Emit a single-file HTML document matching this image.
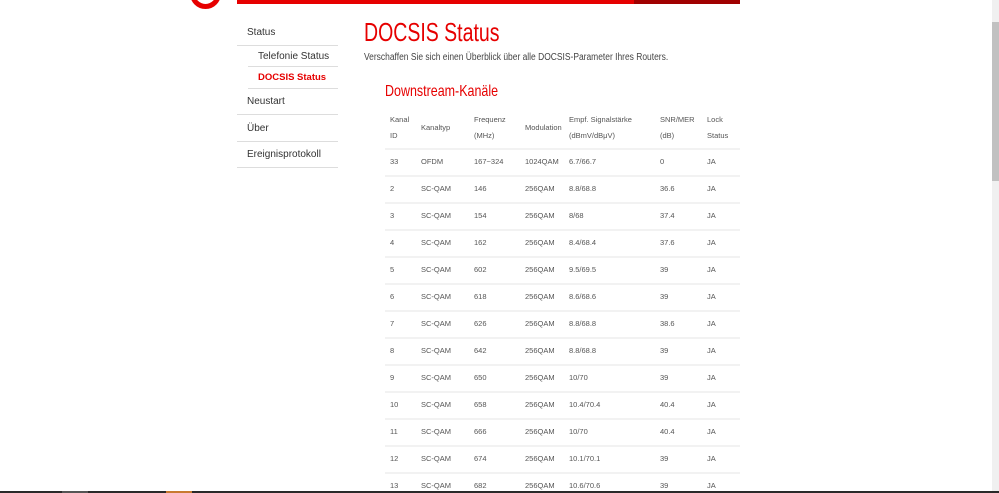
<!DOCTYPE html>
<html><head><meta charset="utf-8"><style>
*{margin:0;padding:0;box-sizing:border-box}
body{width:999px;height:493px;overflow:hidden;background:#fff;font-family:"Liberation Sans",Arial,sans-serif;position:relative;color:#333}
.a{position:absolute;white-space:nowrap}
.ring{position:absolute;left:190px;top:-22px;width:31px;height:31px;border:5px solid #e60000;border-radius:50%}
.bar{position:absolute;left:237px;top:0;width:397px;height:4px;background:#e60000}
.bar2{position:absolute;left:634px;top:0;width:106px;height:4px;background:#a00000}
.nav{font-size:10px;color:#333}
.ln{position:absolute;height:1px;background:#ddd}
h1{position:absolute;left:364px;top:17px;font-weight:normal;font-size:26px;color:#e60000;white-space:nowrap;transform:scaleX(0.75);transform-origin:0 0}
.sub{left:364px;top:52px;font-size:10px;color:#444;transform:scaleX(0.845);transform-origin:0 0}
h2{position:absolute;left:385px;top:83px;font-weight:normal;font-size:16px;color:#e60000;white-space:nowrap;transform:scaleX(0.78);transform-origin:0 0}
.t{font-size:7.5px;color:#555}
.rl{position:absolute;left:385px;width:355px;height:2px;background:#f2f2f2}
.sb{position:absolute;left:992px;top:0;width:7px;height:491px;background:#f0f0f0}
.th{position:absolute;left:992px;top:22px;width:7px;height:159px;background:#c1c1c1}
</style></head><body>
<div class="ring"></div><div class="bar"></div><div class="bar2"></div>
<div class="a nav" style="left:247px;top:27px">Status</div>
<div class="ln" style="left:237px;top:45px;width:101px"></div>
<div class="a nav" style="left:258px;top:51px">Telefonie Status</div>
<div class="ln" style="left:248px;top:66px;width:90px"></div>
<div class="a nav" style="left:258px;top:72px;color:#e60000;font-weight:bold;font-size:9.5px">DOCSIS Status</div>
<div class="ln" style="left:248px;top:88px;width:90px"></div>
<div class="a nav" style="left:247px;top:96px">Neustart</div>
<div class="ln" style="left:237px;top:114px;width:101px"></div>
<div class="a nav" style="left:247px;top:123px">Über</div>
<div class="ln" style="left:237px;top:141px;width:101px"></div>
<div class="a nav" style="left:247px;top:149px">Ereignisprotokoll</div>
<div class="ln" style="left:237px;top:167px;width:101px"></div>
<h1>DOCSIS Status</h1>
<div class="a sub">Verschaffen Sie sich einen Überblick über alle DOCSIS-Parameter Ihres Routers.</div>
<h2>Downstream-Kanäle</h2>
<div class="a t" style="left:390px;top:115px">Kanal</div><div class="a t" style="left:390px;top:131px">ID</div>
<div class="a t" style="left:421px;top:123px">Kanaltyp</div>
<div class="a t" style="left:474px;top:115px">Frequenz</div><div class="a t" style="left:474px;top:131px">(MHz)</div>
<div class="a t" style="left:525px;top:123px">Modulation</div>
<div class="a t" style="left:569px;top:115px">Empf. Signalstärke</div><div class="a t" style="left:569px;top:131px">(dBmV/dBμV)</div>
<div class="a t" style="left:660px;top:115px">SNR/MER</div><div class="a t" style="left:660px;top:131px">(dB)</div>
<div class="a t" style="left:707px;top:115px">Lock</div><div class="a t" style="left:707px;top:131px">Status</div>
<div id="rows"></div>
<script>
var d=[["33","OFDM","167~324","1024QAM","6.7/66.7","0"],["2","SC-QAM","146","256QAM","8.8/68.8","36.6"],["3","SC-QAM","154","256QAM","8/68","37.4"],["4","SC-QAM","162","256QAM","8.4/68.4","37.6"],["5","SC-QAM","602","256QAM","9.5/69.5","39"],["6","SC-QAM","618","256QAM","8.6/68.6","39"],["7","SC-QAM","626","256QAM","8.8/68.8","38.6"],["8","SC-QAM","642","256QAM","8.8/68.8","39"],["9","SC-QAM","650","256QAM","10/70","39"],["10","SC-QAM","658","256QAM","10.4/70.4","40.4"],["11","SC-QAM","666","256QAM","10/70","40.4"],["12","SC-QAM","674","256QAM","10.1/70.1","39"],["13","SC-QAM","682","256QAM","10.6/70.6","39"]];
var x=[390,421,474,525,569,660],h="";
for(var i=0;i<d.length;i++){var y=157+27*i;h+='<div class="rl" style="top:'+(y-9)+'px"></div>';
for(var j=0;j<6;j++)h+='<div class="a t" style="left:'+x[j]+'px;top:'+y+'px">'+d[i][j]+'</div>';
h+='<div class="a t" style="left:707px;top:'+y+'px">JA</div>';}
document.getElementById("rows").innerHTML=h;
</script>
<div class="sb"></div><div class="th"></div>
<div style="position:absolute;left:0;top:491px;width:999px;height:2px;background:#2a2a2a"></div>
<div style="position:absolute;left:62px;top:491px;width:26px;height:2px;background:#555"></div>
<div style="position:absolute;left:166px;top:491px;width:26px;height:2px;background:#c87a30"></div>
</body></html>
